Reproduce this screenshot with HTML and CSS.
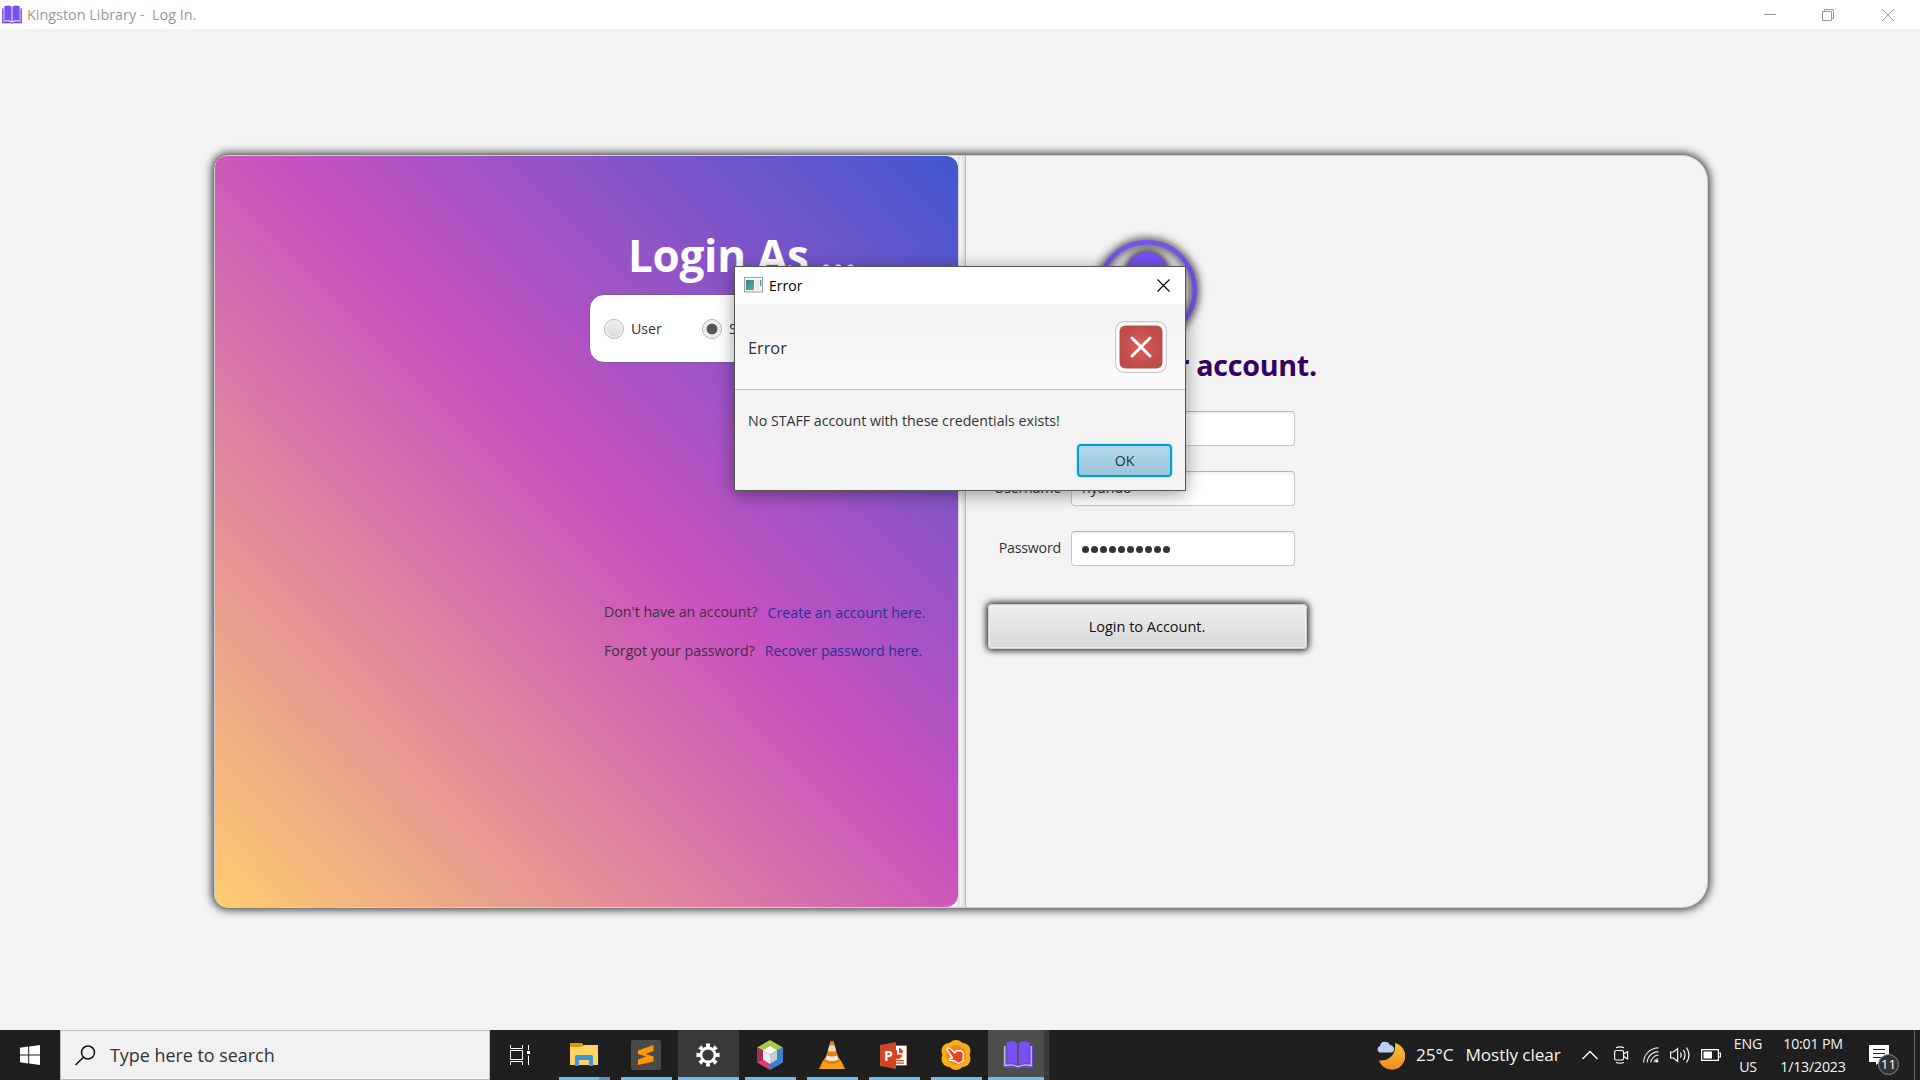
FILE: index.html
```html
<!DOCTYPE html>
<html lang="en">
<head>
<meta charset="utf-8">
<title>Kingston Library - Log In.</title>
<link rel="stylesheet" href="styles.css">
</head>
<body>
<svg width="0" height="0" class="defs">
  <defs>
    <symbol id="book" viewBox="0 0 30 28">
      <path d="M0 5h3v18.500q7 0 11 2h2q4-2 11-2V5h3v22H17q-2 2-4 0H0z" fill="#6a45e0"/>
      <path d="M3.500 1.500Q10-1 14.300 2v22Q10 21.500 3.500 23z" fill="#7a4ff5"/>
      <path d="M26.500 1.500Q20-1 15.700 2v22Q20 21.500 26.500 23z" fill="#7a4ff5"/>
      <path d="M1.800 5v19.500q9-1.500 12 .8h2.400q3-2.300 12-.8V5" fill="none" class="book-edge" stroke-width="1.300"/>
    </symbol>
  </defs>
</svg>
<div class="screen">
  <header class="titlebar">
    <svg class="app-icon" width="20" height="19" preserveAspectRatio="none"><use href="#book"/></svg>
    <span class="app-title">Kingston Library -&nbsp; Log In.</span>
    <div class="controls">
      <svg width="12" height="12"><path d="M0 5.500h12" stroke="#999" fill="none"/></svg>
      <svg width="12" height="12"><path d="M.5 2.500h9v9h-9zM2.500 2.500v-2h9v9h-2" stroke="#999" fill="none"/></svg>
      <svg width="12" height="12"><path d="M0 0l12 12M12 0L0 12" stroke="#999" fill="none"/></svg>
    </div>
  </header>

  <main class="desktop">
    <div class="card">
      <section class="left">
        <h1>Login As ...</h1>
        <div class="roles">
          <label class="role"><i class="radio"></i>User</label>
          <label class="role"><i class="radio on"></i>Staff</label>
        </div>
        <div class="links">
          <p>Don't have an account? <a class="create">Create an account here.</a></p>
          <p>Forgot your password? <a class="recover">Recover password here.</a></p>
        </div>
      </section>
      <div class="divider"></div>
      <section class="right">
        <div class="form">
          <svg class="avatar" width="104" height="104" viewBox="-52 -52 104 104">
            <circle r="47.800" fill="none" stroke="#7750ee" stroke-width="4.400"/>
            <circle cy="-17" r="21" fill="#7750ee"/>
            <path d="M-30 32Q-28 8 0 8T30 32Q0 52-30 32z" fill="#7750ee"/>
          </svg>
          <h2>Login into your account.</h2>
          <div class="row"><span></span><div class="field"></div></div>
          <div class="row"><span>Username</span><div class="field">nyando</div></div>
          <div class="row"><span>Password</span><div class="field dots"><b></b><b></b><b></b><b></b><b></b><b></b><b></b><b></b><b></b><b></b></div></div>
          <div class="login">Login to Account.</div>
        </div>
      </section>
    </div>
  </main>

  <footer class="taskbar">
    <div class="start"><svg width="20" height="20" viewBox="0 0 20 20" fill="#fff"><path d="M0 2.700L8.200 1.500V9.500H0zM9.200 1.400L20 0V9.500H9.200zM0 10.500h8.200v8L0 17.300zM9.200 10.500H20V20L9.200 18.600z"/></svg></div>
    <div class="search">
      <svg width="21" height="21" viewBox="0 0 21 21" fill="none" stroke="#111" stroke-width="1.500"><circle cx="13" cy="7.500" r="6.500"/><path d="M8.400 12.200L.6 20"/></svg>
      <span>Type here to search</span>
    </div>
    <div class="taskview"><svg width="20" height="20" viewBox="0 0 20 20" fill="none" stroke="#fff"><path d="M.5 5.500h12v9H.5zM.5 0v3.500h12V0M.5 20v-3.500h12V20M18.500 0v5M18.500 10.500V20"/><path d="M17 6h3v3h-3z" fill="#fff" stroke="none"/></svg></div>
    <div class="apps">
      <div class="app multi"><svg width="28" height="24" viewBox="0 0 28 24"><path d="M0 0h12l1.500 2-2 3H0z" fill="#dd9a06"/><path d="M0 4h11l3-2h14v20H0z" fill="#ffd35f"/><path d="M5 23V13.500q0-1.500 1.500-1.500h15q1.500 0 1.500 1.500V23h-4v-6H9v6z" fill="#3d97dc"/></svg></div>
      <div class="app"><svg width="30" height="30"><rect width="30" height="30" rx="2" fill="#4a4a4a"/><path d="M7 10.500L22.500 5v6l-8 3 8 2.500v5L7 25v-5.500l8-3L7 14z" fill="#ff9800"/></svg></div>
      <div class="app hot"><svg width="24" height="24" viewBox="-12 -12 24 24" fill="#fff"><circle r="7" fill="none" stroke="#fff" stroke-width="2.800"/><g id="t"><path d="M-2.200-11.500h4.400L1.500-7h-3zM-2.200 11.500h4.400L1.500 7h-3z"/></g><use href="#t" transform="rotate(45)"/><use href="#t" transform="rotate(90)"/><use href="#t" transform="rotate(135)"/></svg></div>
      <div class="app"><svg width="26" height="30" viewBox="0 0 26 30"><path d="M13 0l13 7.500-7 3.500-6-3.500L7 11 0 7.500z" fill="#a9c84c"/><path d="M0 7.500L7 11v8l-6.500 4L0 22z" fill="#a3304e"/><path d="M0 22.500L7 19l6 3.500V30z" fill="#d8416a"/><path d="M26 7.500L19 11v8l-6 3.500V30l13-7.500z" fill="#3b82cc"/><path d="M13 6l7 4.500-7 4-7-4z" fill="#fff"/><path d="M6 10.500l7 4V24l-7-4.500z" fill="#e9eef0"/><path d="M20 10.500l-7 4V24l7-4.500z" fill="#c4d0d4"/></svg></div>
      <div class="app"><svg width="26" height="28" viewBox="0 0 26 28"><path d="M4 19.500h18l4 8.500H0z" fill="#f9a01b"/><path d="M4.500 20q8.500 6 17 0l-1-3h-15z" fill="#ee7a00"/><path d="M11.500 0h3L20 19q-7 4-14 0z" fill="#f27d04"/><path d="M10.400 4.500h5.200l1.500 5.500q-4 1.500-8.200 0z" fill="#ddd"/><path d="M7.500 14.500q5.500 2 11 0l1.200 4q-6.700 3.500-13.400 0z" fill="#e9e9e9"/></svg></div>
      <div class="app"><svg class="ppt" width="27" height="27" viewBox="0 0 27 27"><rect x="13" y="3.500" width="14" height="20" fill="#fff" stroke="#d24625"/><path d="M17 8a4.500 4.500 0 1 0 5 4.500h-5z" fill="#d24625"/><path d="M19 6v5h4a5 5 0 0 0-4-5M16 18h8v1.300h-8zM16 20.500h8v1.200h-8z" fill="#d24625"/><path d="M0 3l16-3v27L0 24z" fill="#d24625"/><text x="4" y="18.500">P</text></svg></div>
      <div class="app"><svg width="30" height="30" viewBox="0 0 30 30"><g fill="#f9ae1a"><circle cx="15" cy="8" r="8"/><circle cx="15" cy="22" r="8"/><circle cx="8.500" cy="11" r="8"/><circle cx="21.500" cy="11" r="8"/><circle cx="8.500" cy="19" r="8"/><circle cx="21.500" cy="19" r="8"/></g><circle cx="15" cy="15" r="10" fill="#f6861f"/><path d="M6 9.500q1-2.500 3.500-.5l4.500 4 1.500-2.500 2 .5 2-.5 2 1.500 1 2-.5 4 .5 2.500-5 3-3.500-2.500-5.500-1q-.5-2 3-2z" fill="#e8431f" stroke="#fff" stroke-width="1.400" stroke-linejoin="round"/></svg></div>
      <div class="app hot current"><svg class="dark-edge" width="30" height="28"><use href="#book"/></svg></div>
    </div>
    <div class="weather">
      <svg width="29" height="29" viewBox="0 0 29 29"><defs><linearGradient id="moon" x1="0" y1="0" x2="0" y2="1"><stop offset="0" stop-color="#f9c536"/><stop offset="1" stop-color="#f08a25"/></linearGradient></defs><path d="M19 2A13.500 13.500 0 1 1 3 19.500Q12 20 16.500 14 20 9 19 2z" fill="url(#moon)"/><path d="M3.500 11.500A3.500 3.500 0 0 1 4 5Q5 0 9.500 1q3-.5 4.500 3 4 .5 4 4.500-.5 3-3 3z" fill="#bcd0f4"/></svg>
      <span>25°C</span><span class="cond">Mostly clear</span>
    </div>
    <div class="tray">
      <svg width="16" height="10" fill="none" stroke="#fff" stroke-width="1.400"><path d="M.5 9L8 1.500 15.500 9"/></svg>
      <svg class="cam" width="15" height="18" viewBox="0 0 15 18" fill="none" stroke="#fff" stroke-width="1.200"><rect x=".6" y="4.500" width="9" height="9.500" rx="1.500"/><path d="M9.600 8l4-2.500v7.500l-4-2.500M2 1.700q4-1.500 8 0M2 16.500q4 1.500 8 0"/></svg>
      <svg class="wifi" width="16" height="16" viewBox="0 0 16 16" fill="none" stroke="#ddd" stroke-width="1.200"><path d="M.6 15.500A15 15 0 0 1 15.500.8M4.200 15.500A11.300 11.300 0 0 1 15.500 4.600M7.900 15.500a7.600 7.600 0 0 1 7.600-7.300"/><path d="M11 15.500q.5-3.500 4.500-3.800" opacity=".7"/><circle cx="13.800" cy="14" r="1.600" fill="#fff" stroke="none"/></svg>
      <svg class="vol" width="20" height="18" viewBox="0 0 20 18" fill="none" stroke="#fff" stroke-width="1.200"><path d="M.6 6h3l4-3.500v13L3.600 12h-3zM10.500 6.500q1.500 2.500 0 5M13.500 4q3 5 0 10M16.500 1.500q5 7.500 0 15"/></svg>
      <svg class="bat" width="20" height="12" viewBox="0 0 20 12"><path d="M.6.600h16.800v10.800H.6zM18 4h1.500v4H18" fill="none" stroke="#fff" stroke-width="1.200"/><path d="M2.500 2.500H11v7H2.500z" fill="#fff"/></svg>
    </div>
    <div class="two lang"><span>ENG</span><span>US</span></div>
    <div class="two clock"><span>10:01 PM</span><span>1/13/2023</span></div>
    <div class="notes"><svg width="20" height="20" viewBox="0 0 20 20"><path d="M0 0h20v17h-9l-4 3v-3H0z" fill="#fff"/><path d="M4 4.500h12M4 8.500h12M4 12.500h8" stroke="#222"/></svg><span class="badge">11</span></div>
    <div class="peek"></div>
  </footer>

  <div class="dialog">
    <div class="dlg-title">
      <svg width="19" height="16" viewBox="0 0 19 16"><defs><linearGradient id="pic" x1="0" y1="0" x2="1" y2="1"><stop offset="0" stop-color="#3f78a8"/><stop offset="1" stop-color="#53b478"/></linearGradient></defs><rect x=".5" y=".5" width="18" height="14.500" fill="#f4f6f6" stroke="#999fa3"/><rect x="2" y="3" width="8" height="10" fill="url(#pic)"/><path d="M12 3h3v10h-3z" fill="#e6e6e6"/><path d="M16 3h1.300v6H16z" fill="#4c9aa0"/></svg>
      <span>Error</span>
      <svg class="x" width="13" height="13"><path d="M.5.500l12 12M12.500.500l-12 12" stroke="#000" fill="none" stroke-width="1.100"/></svg>
    </div>
    <div class="dlg-head">
      <span>Error</span>
      <svg width="52" height="52" viewBox="0 0 52 52"><defs><radialGradient id="red"><stop offset="0" stop-color="#dc5c5c"/><stop offset="1" stop-color="#be4c48"/></radialGradient></defs><rect x=".7" y=".7" width="50.600" height="50.600" rx="8.500" fill="#fff" stroke="#c9c9c9" stroke-width="1.200"/><rect x="4.500" y="4.500" width="43" height="43" rx="6" fill="url(#red)"/><path d="M17 17l18 18M35 17L17 35" stroke="#fff" stroke-width="3" stroke-linecap="round"/></svg>
    </div>
    <div class="dlg-body">
      <p>No STAFF account with these credentials exists!</p>
      <div class="ok">OK</div>
    </div>
  </div>
</div>
</body>
</html>
```
FILE: styles.css
```css
* { box-sizing: border-box; }
body { margin: 0; overflow: hidden; font-family: "Open Sans", "Noto Sans", sans-serif; font-size: 14.2px; line-height: 20px; color: #333; }
h1, h2, p { margin: 0; white-space: nowrap; }
svg { display: block; flex: none; }
.defs { position: absolute; }
.screen { position: relative; width: 1920px; height: 1080px; display: flex; flex-direction: column; background: #f3f3f3; }
.book-edge { stroke: #c9c4d8; }
.dark-edge .book-edge { stroke: #39344d; }

.titlebar { height: 29px; flex: none; display: flex; align-items: center; background: #fff; color: #999; padding: 0 26px 0 2px; }
.app-title { margin-left: 5px; font-size: 14.4px; }
.controls { margin-left: auto; display: flex; gap: 46px 47px; }
.controls svg:nth-child(2) { margin: 0 1px 0 -1px; }

.desktop { flex: 1; display: flex; padding: 126px 212px 122px 214px; }
.card { flex: 1; display: flex; border: 1px solid #cfcfcf; border-radius: 14px 26px 26px 14px; box-shadow: 0 0 8px 2px rgba(0,0,0,.75); background: #f3f3f3; }
.left { width: 743px; border-radius: 12px; background: linear-gradient(to top right, #ffcc70 0%, #c850c0 54%, #4158d0 100%); padding: 68px 0 0 374px; }
.left h1 { margin-left: 39px; color: #fff; font-size: 44px; line-height: 62px; letter-spacing: -.3px; }
.roles { display: flex; align-items: center; gap: 40px; margin-top: 8px; width: 310px; height: 69px; padding-left: 14px; background: #fff; border: 1px solid #7d5a9c; border-radius: 15px; }
.role { display: flex; align-items: center; gap: 7px; }
.radio { width: 20px; height: 20px; border-radius: 50%; border: 1px solid #b5b5b5; background: linear-gradient(#f0f0f0, #dadada); box-shadow: inset 0 0 0 1px #fafafa; }
.radio.on { background: radial-gradient(circle, #555 5px, #e9e9e9 5.700px); }
.links { margin: 239px 0 0 15px; display: flex; flex-direction: column; gap: 19px; }
.links p { display: flex; color: #402f45; }
.links a { color: #1b3596; margin-left: 10px; }
.links .create { margin-bottom: -1px; padding-top: 1px; }
.links .recover { letter-spacing: -.05px; }
.divider { width: 8px; background: linear-gradient(90deg, #d0d0d0, #f6f6f6 2px, #ddd); border-right: 1px solid #b9b9b9; }
.right { flex: 1; padding: 82px 0 0 21px; }
.form { width: 320px; display: flex; flex-direction: column; align-items: center; }
.avatar { overflow: visible; filter: drop-shadow(0 0 5px rgba(0,0,0,.85)) drop-shadow(0 0 3px rgba(0,0,0,.4)); }
.form h2 { margin-top: 1px; margin-bottom: 23px; font-size: 28.700px; line-height: 44px; letter-spacing: -.3px; color: #350060; }
.row { align-self: stretch; display: flex; align-items: center; height: 36px; margin-bottom: 24px; padding: 0 12px 0 0; }
.row span { width: 84px; padding-right: 10px; text-align: right; letter-spacing: -.2px; }
.field { flex: none; width: 224px; height: 35px; display: flex; align-items: center; padding-left: 10px; background: linear-gradient(#f1f1f1, #fff 4px); border: 1px solid #c8c8c8; border-top-color: #b5b5b5; border-radius: 4px; }
.dots { gap: 2px; padding-top: 2px; }
.dots b { width: 7px; height: 7px; border-radius: 50%; background: #333; }
.login { width: 319px; height: 45px; margin-top: 14px; display: flex; align-items: center; justify-content: center; color: #111; font-size: 14.5px; background: linear-gradient(#eee, #d8d8d8); border: 1px solid #ccc; border-radius: 4px; box-shadow: inset 0 0 0 1px #eee, 0 0 6px 2px rgba(0,0,0,.8); }

.taskbar { height: 50px; flex: none; display: flex; align-items: stretch; background: #1f1f1f; color: #f4f4f4; }
.start { width: 60px; display: grid; place-items: center; }
.search { width: 430px; display: flex; align-items: center; padding-left: 14px; gap: 14px; background: #f1f1f1; border: 1px solid #bbb; color: #333; font-size: 17.9px; }
.taskview { width: 60px; display: grid; place-items: center; }
.apps { display: flex; gap: 1px; padding-left: 4px; }
.app { width: 61px; display: grid; place-items: center; padding-right: 2px; background: linear-gradient(#76b9ed, #76b9ed) 5px bottom / 51px 3px no-repeat; }
.multi { background-image: linear-gradient(90deg, #76b9ed 40px, #5a94c0 40px); }
.hot { background-color: #393939; background-position: 0 bottom; background-size: 100% 3px; }
.current { background-color: #4d4d4d; border-right: 5px solid #3a3a3a; padding: 0 0 0 3px; }
.ppt text { font: bold 14px "Open Sans", sans-serif; fill: #fff; }
.weather { display: flex; align-items: center; margin-left: 327px; font-size: 17.2px; width: 206px; }
.weather span { margin-left: 11px; white-space: nowrap; letter-spacing: -.1px; }
.weather .cond { margin-left: 12px; }
.tray { display: flex; align-items: center; }
.tray .cam { margin-left: 16px; }
.tray .wifi { margin-left: 14px; }
.tray .vol { margin-left: 11px; }
.tray .bat { margin-left: 11px; }
.two { display: flex; flex-direction: column; align-items: center; line-height: 22.500px; padding-top: 3px; letter-spacing: -.2px; }
.lang { width: 54px; }
.clock { width: 76px; }
.notes { position: relative; display: flex; align-items: center; margin-left: 18px; }
.badge { position: absolute; left: 9px; top: 24px; width: 21px; height: 21px; border-radius: 50%; background: #333; border: 1px solid #888; color: #fff; font-size: 13.5px; line-height: 19px; text-align: center; }
.peek { margin-left: auto; width: 6px; border-left: 1px solid #666; }

.dialog { position: absolute; left: 734px; top: 266px; width: 452px; height: 225px; display: flex; flex-direction: column; border: 1px solid #555; background: #f3f3f3; box-shadow: 0 3px 16px rgba(0,0,0,.4); }
.dlg-title { height: 37px; display: flex; align-items: center; background: #fff; padding: 0 15px 1px 9px; color: #000; font-size: 14px; }
.dlg-title span { margin-left: 6px; padding-top: 1px; }
.dlg-title .x { margin-left: auto; }
.dlg-head { height: 86px; display: flex; align-items: center; justify-content: space-between; padding: 0 18px 0 13px; font-size: 16.300px; background: linear-gradient(#f2f2f2, #fbfbfb); border-bottom: 1px solid #c4c4c4; }
.dlg-head span { padding-top: 2px; }
.dlg-body { flex: 1; padding: 21px 13px 0 13px; }
.ok { width: 95px; height: 33px; margin: 13px 0 0 auto; display: grid; place-items: center; background: linear-gradient(#b0d9ec, #9bc4d8); border: 2px solid #039ed3; border-radius: 4px; box-shadow: 0 0 0 1px #c5e6f2; }
```
